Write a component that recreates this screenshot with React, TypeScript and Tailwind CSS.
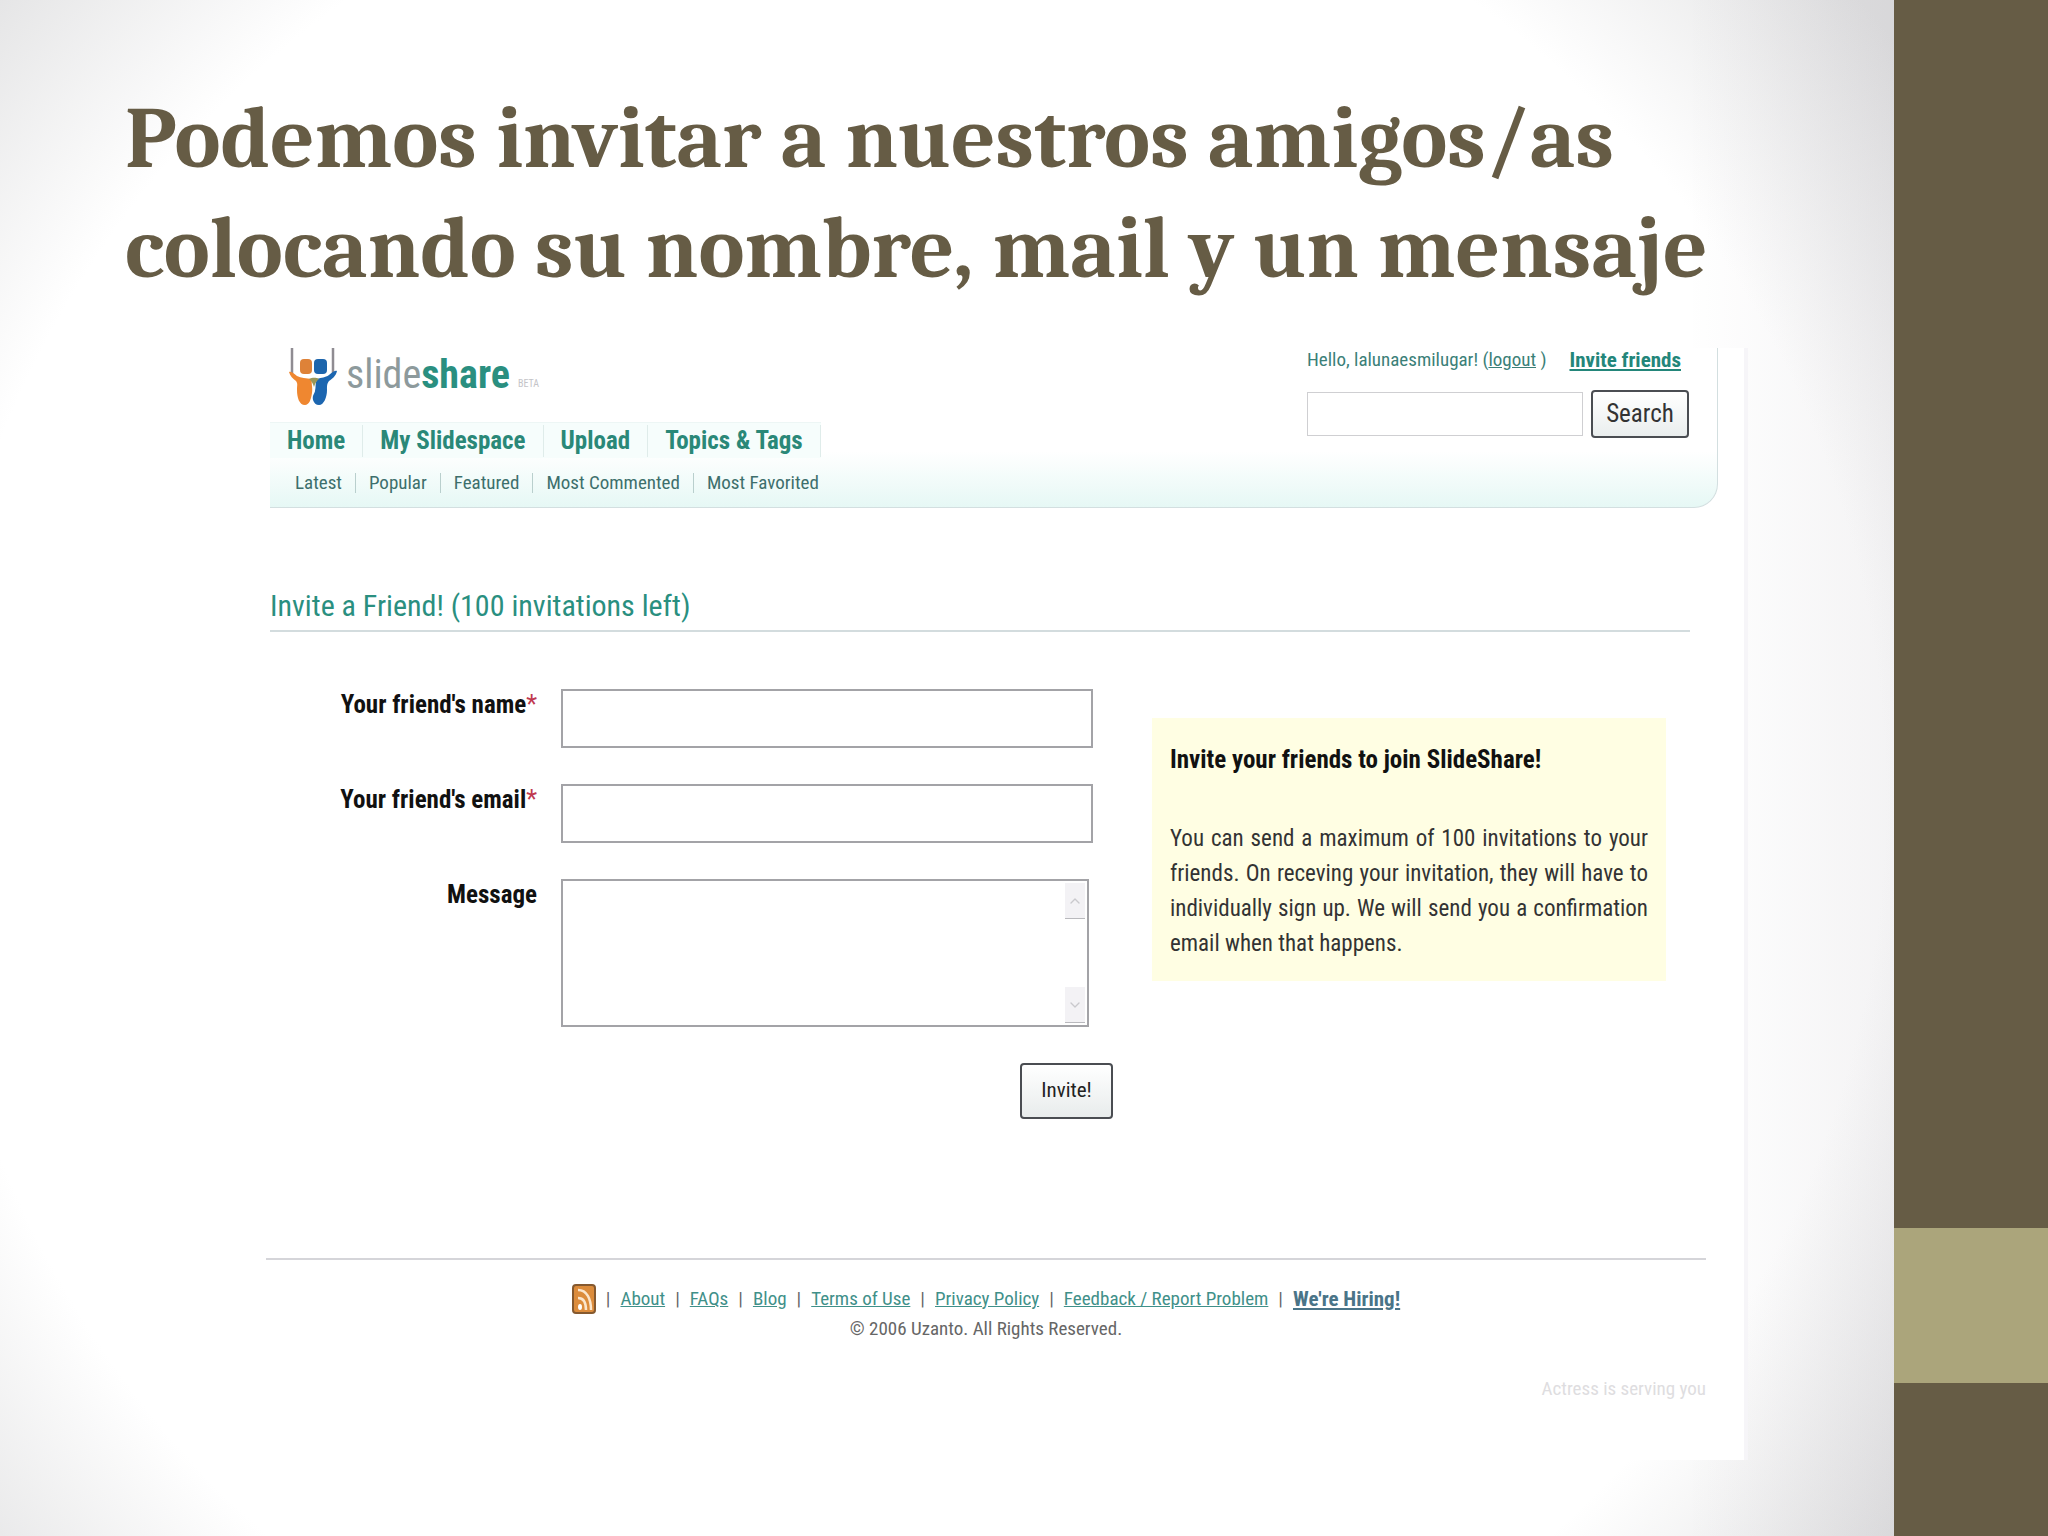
import React, { FC, ReactNode } from 'react';
import { ChevronDown, ChevronUp } from 'lucide-react';

const NAV = ['Home', 'My Slidespace', 'Upload', 'Topics & Tags'];
const SUB_NAV = ['Latest', 'Popular', 'Featured', 'Most Commented', 'Most Favorited'];
const FOOTER_LINKS = [
  'About',
  'FAQs',
  'Blog',
  'Terms of Use',
  'Privacy Policy',
  'Feedback / Report Problem',
];

const Logo: FC = () => (
  <svg viewBox="0 0 50 58" className="h-[58px] w-[50px] shrink-0" aria-hidden="true">
    <path d="M4 0v26M45 0v26" fill="none" stroke="#8f8c92" strokeWidth="2.5" />
    <rect x="12" y="11" width="12" height="15" rx="4" fill="#de8238" />
    <rect x="26" y="11" width="13" height="15" rx="4" fill="#1d65ac" />
    <path
      d="M1 24c3-1 5 2 8 4 4 2 9 2 15 3-1 5 1 8 0 14-1 7-3 12-7 12-6 0-8-8-8-15 0-5 1-6-1-9-3-2-6-5-7-9z"
      fill="#ef8730"
    />
    <path
      d="M49 23c-3-1-5 2-8 4-4 3-7 2-12 4-2 4-1 8-2 12 0 2-3 4-2 9 1 3 3 5 6 5 5 0 8-8 8-15 0-5 0-6 2-9 3-2 7-5 8-10z"
      fill="#1c66b0"
    />
    <path d="M21 31c3-1 6-2 10 0-3 2-4 5-5 8-1-3-2-6-5-8z" fill="#9a9758" />
  </svg>
);

const RssIcon: FC = () => (
  <svg viewBox="0 0 24 30" className="h-[30px] w-6" aria-hidden="true">
    <rect x="1" y="1" width="22" height="28" rx="3" fill="#dc8c3c" stroke="#85592f" strokeWidth="2" />
    <ellipse cx="8" cy="23" rx="2" ry="3" fill="#fff" />
    <path d="M6 14c6 0 8 5 8 12M6 6c9 0 13 9 13 20" fill="none" stroke="#fbe6cd" strokeWidth="2.5" />
  </svg>
);

type FieldProps = {
  id: string;
  label: string;
  required?: boolean;
  children: ReactNode;
};

const Field: FC<FieldProps> = ({ id, label, required, children }) => (
  <div className="grid grid-cols-[267px_minmax(0,1fr)] gap-x-6">
    <label htmlFor={id} className="text-right text-[25px] leading-8 font-bold text-[#111]">
      {label}
      {required && <span className="font-normal text-[#c0394f]">*</span>}
    </label>
    {children}
  </div>
);

const Header: FC = () => (
  <header className="flex h-40 justify-between rounded-br-3xl border-r border-b border-[#d3dfe0] bg-linear-to-b from-white from-65% to-[#e6f8f5]">
    <div className="flex flex-col">
      <a href="#home" className="flex h-[74px] items-start gap-2 pl-[18px] text-[#8d9a9c]">
        <Logo />
        <span className="text-[40px] leading-[54px]">
          slide<b className="text-[#2a8f80]">share</b>
        </span>
        <span className="pt-7 text-[10px] leading-4 text-[#c4c4c8]">BETA</span>
      </a>
      <nav aria-label="Main" className="flex h-9 items-center self-start border-t border-[#edf6f5] bg-[#f6fdfc]">
        {NAV.map((item) => (
          <a
            key={item}
            href="#nav"
            className="border-r border-[#dfecea] px-[17px] text-[25px] leading-8 font-bold text-[#2a8878]"
          >
            {item}
          </a>
        ))}
      </nav>
      <nav aria-label="Slides" className="flex flex-1 items-center pl-3">
        {SUB_NAV.map((item) => (
          <a
            key={item}
            href="#sub"
            className="border-r border-[#b9cfcd] px-[13px] text-[19px] leading-5 text-[#3d6f6c] last:border-r-0"
          >
            {item}
          </a>
        ))}
      </nav>
    </div>

    <div className="flex flex-col gap-[18px] pr-7">
      <div className="flex justify-between pr-2 text-[19px] leading-6 text-[#3b7f78]">
        <span>
          Hello, lalunaesmilugar! (
          <a href="#logout" className="underline">
            logout
          </a>{' '}
          )
        </span>
        <a href="#invite" className="text-[21px] font-bold text-[#23867a] underline">
          Invite friends
        </a>
      </div>
      <form className="flex items-center gap-2">
        <input aria-label="Search slides" className="h-11 w-[276px] border border-[#cfcfd2] bg-white px-2" />
        <button
          type="button"
          className="h-12 w-[98px] rounded-sm border-2 border-[#4a4d52] bg-linear-to-b from-white to-[#eaeeee] text-[25px] text-[#333]"
        >
          Search
        </button>
      </form>
    </div>
  </header>
);

const InviteForm: FC = () => (
  <form className="flex w-[823px] flex-col gap-9 pt-[57px]">
    <Field id="name" label="Your friend's name" required>
      <input id="name" className="h-[59px] w-full border-2 border-[#a3a3a7] bg-white px-3 text-[25px]" />
    </Field>
    <Field id="email" label="Your friend's email" required>
      <input id="email" type="email" className="h-[59px] w-full border-2 border-[#a3a3a7] bg-white px-3 text-[25px]" />
    </Field>
    <Field id="message" label="Message">
      <div className="relative mr-1">
        <textarea
          id="message"
          className="block h-[148px] w-full resize-none border-2 border-[#a3a3a7] bg-white px-3 text-[25px]"
        />
        <div className="pointer-events-none absolute inset-y-1 right-1 flex w-5 flex-col justify-between text-[#c9c9cd]">
          <span className="flex h-9 items-center justify-center border-b border-[#b9b9bd] bg-[#f3f2f5]">
            <ChevronUp className="size-4" />
          </span>
          <span className="flex h-9 items-center justify-center border-b border-[#b9b9bd] bg-[#f3f2f5]">
            <ChevronDown className="size-4" />
          </span>
        </div>
      </div>
    </Field>
    <button
      type="button"
      className="-mr-5 h-14 w-[93px] self-end rounded-sm border-2 border-[#4a4d52] bg-linear-to-b from-white to-[#e8ecec] text-[21px] text-[#222]"
    >
      Invite!
    </button>
  </form>
);

const InviteNote: FC = () => (
  <aside className="mt-[86px] w-[514px] self-start bg-[#fffee3] px-[18px] pt-6 pb-5 text-[#333]">
    <h3 className="text-[25px] leading-[35px] font-bold text-[#111]">Invite your friends to join SlideShare!</h3>
    <p className="mt-11 text-justify text-[23px] leading-[35px]">
      You can send a maximum of 100 invitations to your friends. On receving your invitation, they will have to
      individually sign up. We will send you a confirmation email when that happens.
    </p>
  </aside>
);

const Footer: FC = () => (
  <footer className="mr-3 -ml-1 border-t-2 border-[#d5d5d9] text-[19px] leading-[30px] text-[#666]">
    <div className="mt-6 flex items-center justify-center gap-2.5">
      <a href="#rss" aria-label="RSS">
        <RssIcon />
      </a>
      {FOOTER_LINKS.map((link) => (
        <React.Fragment key={link}>
          <span>|</span>
          <a href="#footer" className="text-[#3f9089] underline">
            {link}
          </a>
        </React.Fragment>
      ))}
      <span>|</span>
      <a href="#hiring" className="text-[21px] font-bold text-[#4a7488] underline">
        We're Hiring!
      </a>
    </div>
    <p className="text-center">© 2006 Uzanto. All Rights Reserved.</p>
    <p className="mt-[30px] text-right text-[#dedde0]">Actress is serving you</p>
  </footer>
);

export default function App() {
  return (
    <div className="flex min-h-screen bg-white">
      <main className="flex-1 bg-[linear-gradient(to_left,rgba(60,50,70,0.06),transparent_11%),radial-gradient(circle_at_48%_52%,#ffffff_77%,#e2e2e3_98%)] pb-[74px]">
        <h1 className="pt-[84px] pl-[125px] font-['Cambria','Caladea','Noto_Serif','Liberation_Serif',serif] text-[87px] leading-[110px] font-bold text-[#665c45]">
          Podemos invitar a nuestros amigos/as
          <br />
          colocando su nombre, mail y un mensaje
        </h1>
        <section className="mt-11 mr-[146px] ml-[194px] border-r-4 border-[#f6f5f8] bg-white pr-[26px] pb-14 pl-[76px] font-['Roboto_Condensed','Liberation_Sans',sans-serif]">
          <Header />
          <h2 className="mt-[78px] mr-7 border-b-2 border-[#d3dcde] pb-1 text-[30px] leading-10 text-[#2a8f80]">
            Invite a Friend! (100 invitations left)
          </h2>
          <div className="flex justify-between pr-[52px]">
            <InviteForm />
            <InviteNote />
          </div>
          <div className="mt-[139px]">
            <Footer />
          </div>
        </section>
      </main>
      <div className="flex w-[154px] flex-col bg-[#665c45]">
        <div className="flex-[1228]" />
        <div className="flex-[155] bg-[#aba57b]" />
        <div className="flex-[153]" />
      </div>
    </div>
  );
}
